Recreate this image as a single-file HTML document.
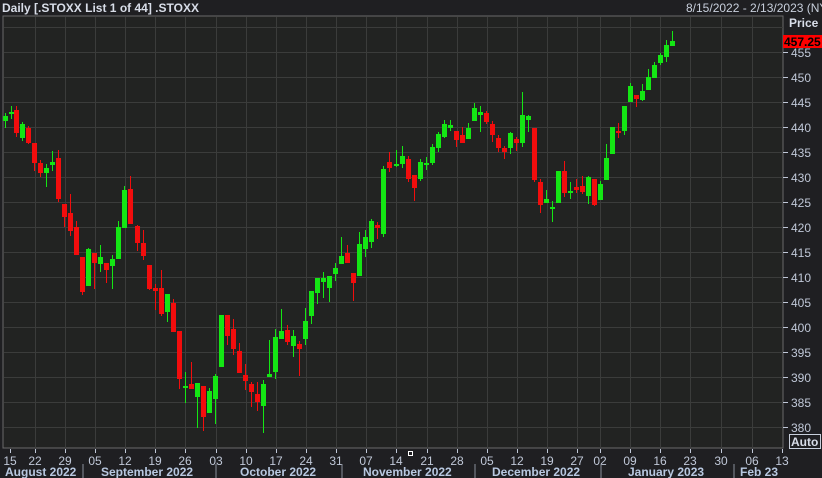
<!DOCTYPE html>
<html><head><meta charset="utf-8"><style>
body{margin:0;background:#1f1f22;width:822px;height:478px;overflow:hidden;font-family:"Liberation Sans",sans-serif}
svg{display:block}
</style></head><body>
<svg id="s" width="822" height="478" xmlns="http://www.w3.org/2000/svg" font-family="Liberation Sans, sans-serif">
<rect width="822" height="478" fill="#1f1f22"/>
<rect x="3" y="16" width="780" height="432" fill="#222322" stroke="#6a6a6a" stroke-width="1"/>
<g id="grid" stroke="#3b3c3b" stroke-width="1"></g>
<g id="c"></g>
<text x="2" y="12" fill="#d8dde8" font-size="12" font-weight="bold">Daily [.STOXX List 1 of 44] .STOXX</text>
<text x="686" y="12" fill="#c8cfdc" font-size="12">8/15/2022 - 2/13/2023 (NYC</text>
<text x="789" y="27" fill="#d8dde8" font-size="12" font-weight="bold">Price</text>
<g id="ax" fill="#c0c8d8" font-size="12"></g>
<rect x="783" y="35" width="39" height="13" fill="#ff0000"/>
<text x="784" y="46" fill="#000" font-size="12" font-weight="bold">457.25</text>
<rect x="789.5" y="434.5" width="31" height="14" fill="none" stroke="#c8cfdc"/>
<text x="791" y="446" fill="#d8dde8" font-size="12" font-weight="bold">Auto</text>
<g id="bx" fill="#c0c8d8" font-size="12"></g>
<g fill="#b8c8e0" font-size="12" font-weight="bold">
<text x="5" y="476">August 2022</text>
<text x="101" y="476">September 2022</text>
<text x="240" y="476">October 2022</text>
<text x="363" y="476">November 2022</text>
<text x="492" y="476">December 2022</text>
<text x="628" y="476">January 2023</text>
<text x="740" y="476">Feb 23</text>
</g>
<g stroke="#8a8f99"><line x1="83" y1="464" x2="83" y2="478"/><line x1="216" y1="464" x2="216" y2="478"/><line x1="342" y1="464" x2="342" y2="478"/><line x1="475" y1="464" x2="475" y2="478"/><line x1="601" y1="464" x2="601" y2="478"/><line x1="734" y1="464" x2="734" y2="478"/></g>
<rect x="408.5" y="451.5" width="4" height="4" fill="none" stroke="#fff"/>
</svg>
<script>
var NS="http://www.w3.org/2000/svg";
function el(p,t,a,txt){var e=document.createElementNS(NS,t);for(var k in a)e.setAttribute(k,a[k]);if(txt)e.textContent=txt;p.appendChild(e);return e;}
var g=document.getElementById('grid');
for(var p=380;p<=460;p+=5){var y=427-(p-380)*5+0.5;el(g,'line',{x1:4,x2:783,y1:y,y2:y});}
var vx=[35,65,95,125,155,185,216,246,276,306,336,366,396,427,457,487,517,547,577,600,630,660,690,721,752];
vx.forEach(function(x){el(g,'line',{x1:x+.5,x2:x+.5,y1:17,y2:448});});
var ax=document.getElementById('ax');
for(var p=380;p<=455;p+=5){var y=427-(p-380)*5;el(ax,'line',{x1:783,x2:788,y1:y+.5,y2:y+.5,stroke:'#c0c8d8'});el(ax,'text',{x:791,y:y+5},String(p));}
var bx=document.getElementById('bx');
var lbl=["15","22","29","05","12","19","26","03","10","17","24","31","07","14","21","28","05","12","19","27","02","09","16","23","30","06","13"];
var lx=[10].concat(vx).concat([782]);
lbl.forEach(function(t,i){var x=lx[i];el(bx,'line',{x1:x+.5,x2:x+.5,y1:449,y2:453,stroke:'#c0c8d8'});el(bx,'text',{x:x,y:465,'text-anchor':'middle'},t);});
var d=[
[5,116,121,113,128,1],[11,112,114,106,119,1],[16,110,133,106,137,0],[22,124,138,122,141,1],[28,128,143,126,144,0],[34,143,163,143,171,0],[40,163,173,160,177,0],[46,168,173,164,187,1],[52,162,165,151,171,1],[58,158,199,150,202,0],[64,204,217,204,227,0],[70,213,231,194,236,0],[76,227,255,221,255,0],[82,257,292,257,295,0],[88,249,286,248,286,1],[94,253,263,253,289,0],[100,257,264,245,272,1],[106,263,270,263,283,0],[112,259,266,255,289,1],[118,227,259,221,259,1],[124,190,228,186,228,1],[130,189,224,176,224,0],[137,226,243,225,251,0],[143,243,256,230,260,0],[149,265,289,265,290,0],[155,288,291,284,310,0],[161,288,314,270,316,0],[167,294,312,294,322,1],[173,303,332,299,332,0],[179,331,379,331,389,0],[185,386,388,372,403,1],[191,384,389,362,389,0],[197,383,397,383,428,1],[203,386,417,386,431,0],[209,391,413,388,413,1],[215,376,399,374,424,1],[221,315,367,315,367,1],[227,315,336,315,345,0],[233,329,349,319,355,0],[239,351,373,343,373,0],[245,375,381,364,390,0],[251,384,392,382,407,0],[257,394,402,382,411,0],[263,384,406,380,433,1],[269,374,377,340,377,1],[275,337,372,329,379,1],[281,331,339,309,339,1],[287,330,342,325,345,0],[293,336,346,330,357,1],[299,344,349,341,376,0],[305,321,339,308,345,1],[311,291,316,291,324,1],[317,278,293,278,304,1],[323,278,282,272,298,1],[329,276,288,276,302,1],[335,268,274,263,281,1],[341,256,264,237,264,1],[347,253,263,245,263,0],[353,273,283,273,301,0],[359,244,276,232,276,1],[365,237,249,230,257,1],[371,221,242,219,248,1],[377,225,228,222,239,0],[383,169,234,166,237,1],[389,162,168,152,172,0],[396,164,166,150,167,1],[402,156,164,146,168,1],[408,159,179,156,182,0],[414,175,188,175,201,0],[420,162,179,159,181,1],[426,163,165,157,170,1],[432,147,163,144,165,1],[438,134,148,132,152,1],[444,124,137,120,138,1],[450,125,128,120,131,1],[456,131,140,131,147,0],[462,135,143,127,143,0],[468,128,139,123,139,1],[474,108,121,103,121,1],[480,112,115,106,132,1],[486,113,122,111,124,0],[492,124,135,121,142,0],[498,138,148,135,152,0],[504,148,152,146,159,0],[510,133,148,132,154,1],[516,139,143,137,151,0],[522,115,143,92,147,1],[528,116,120,115,132,1],[534,128,180,128,182,0],[540,182,205,179,213,0],[546,199,203,190,203,1],[552,207,209,201,222,1],[558,171,203,171,203,1],[564,171,193,161,197,0],[570,191,193,182,199,1],[576,187,190,179,193,0],[582,186,192,176,194,0],[588,177,196,176,204,1],[594,179,205,179,206,0],[600,184,200,181,200,1],[606,158,180,144,180,1],[612,127,154,127,154,1],[618,131,133,123,138,0],[624,106,131,106,135,1],[630,86,102,83,102,1],[636,95,99,95,107,0],[642,91,100,84,101,1],[648,77,90,69,90,1],[654,65,78,62,78,1],[660,55,63,53,65,1],[666,45,57,40,62,1],[672,41,46,31,46,1]];
var c=document.getElementById('c');
d.forEach(function(k){var col=k[5]?'#14e614':'#f20d0d';el(c,'rect',{x:k[0],y:k[3],width:1,height:Math.max(1,k[4]-k[3]),fill:col});el(c,'rect',{x:k[0]-2,y:k[1],width:5,height:Math.max(2,k[2]-k[1]),fill:col});});
</script>
</body></html>
